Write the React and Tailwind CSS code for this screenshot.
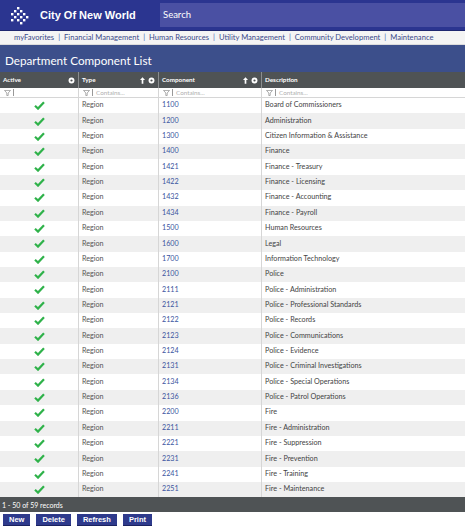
import React from "react";

const rows = [
  ["1100", "Board of Commissioners"],
  ["1200", "Administration"],
  ["1300", "Citizen Information & Assistance"],
  ["1400", "Finance"],
  ["1421", "Finance - Treasury"],
  ["1422", "Finance - Licensing"],
  ["1432", "Finance - Accounting"],
  ["1434", "Finance - Payroll"],
  ["1500", "Human Resources"],
  ["1600", "Legal"],
  ["1700", "Information Technology"],
  ["2100", "Police"],
  ["2111", "Police - Administration"],
  ["2121", "Police - Professional Standards"],
  ["2122", "Police - Records"],
  ["2123", "Police - Communications"],
  ["2124", "Police - Evidence"],
  ["2131", "Police - Criminal Investigations"],
  ["2134", "Police - Special Operations"],
  ["2136", "Police - Patrol Operations"],
  ["2200", "Fire"],
  ["2211", "Fire - Administration"],
  ["2221", "Fire - Suppression"],
  ["2231", "Fire - Prevention"],
  ["2241", "Fire - Training"],
  ["2251", "Fire - Maintenance"],
];

const nav = [
  "myFavorites",
  "Financial Management",
  "Human Resources",
  "Utility Management",
  "Community Development",
  "Maintenance",
];

const Logo = () => {
  // diamond lattice of small squares
  const pts = [
    [6, 0], [3, 3], [9, 3], [0, 6], [6, 6], [12, 6], [3, 9], [9, 9], [15, 9],
    [6, 12], [12, 12], [9, 15], [0, 12],
  ];
  return (
    <svg width="19" height="19" viewBox="0 0 19 19">
      {pts.map(([x, y], i) => (
        <rect key={i} x={x + 1} y={y + 1} width="2.4" height="2.4" fill="white" />
      ))}
    </svg>
  );
};

const Gear = () => (
  <svg width="7" height="7" viewBox="0 0 10 10">
    <circle cx="5" cy="5" r="4.2" fill="white" />
    <circle cx="5" cy="5" r="1.6" fill="#4f5355" />
  </svg>
);

const Arrow = () => (
  <svg width="5" height="7" viewBox="0 0 6 8">
    <path d="M3 0 L6 3.5 H4 V8 H2 V3.5 H0 Z" fill="white" />
  </svg>
);

const Funnel = () => (
  <svg width="7" height="6" viewBox="0 0 8 7">
    <path d="M0.5 0.5 H7.5 L4.8 3.5 V6.5 H3.2 V3.5 Z" fill="none" stroke="#888" strokeWidth="0.8" />
  </svg>
);

const Check = () => (
  <svg width="11" height="9" viewBox="0 0 11 9">
    <path d="M1 4.8 L4 7.6 L10 1.2" fill="none" stroke="#2fb24a" strokeWidth="2.2" />
  </svg>
);

const FilterCell = ({ text, className }) => (
  <div className={`flex items-center gap-[2px] px-[4px] border-r border-[#d6d6d6] ${className}`}>
    <Funnel />
    <span className="w-px h-[7px] bg-[#999]"></span>
    {text && <span className="text-[#b0b0b0] ml-px">Contains...</span>}
  </div>
);

export default function App() {
  return (
    <div className="w-[465px] h-[528px] bg-white overflow-hidden font-['Lato',sans-serif]">
      <header className="h-[30px] bg-[#2b3590] flex items-center">
        <div className="w-[160px] flex items-center pl-[10px] gap-[11px]">
          <Logo />
          <span className="text-white font-bold text-[11px] font-['Liberation_Sans',sans-serif] whitespace-nowrap">
            City Of New World
          </span>
        </div>
        <div className="flex-1 h-[24px] bg-[#4a50a3] flex items-center pl-[3px] text-white text-[9.5px]">
          Search
        </div>
      </header>
      <div className="h-px bg-[#1f2770]"></div>
      <nav className="h-[14px] bg-[#f4f4f4] border-b border-[#dcdcdc] flex items-center pl-[14px] text-[7.6px] text-[#3b4a8a] whitespace-nowrap">
        {nav.map((n, i) => (
          <React.Fragment key={n}>
            {i > 0 && <span className="mx-[4px] text-[#4a6ab0]">|</span>}
            <span>{n}</span>
          </React.Fragment>
        ))}
      </nav>
      <div className="h-[27px] bg-[#3c4f8b] flex items-end pl-[5px] pb-[2px]">
        <span className="text-white text-[11.7px]">Department Component List</span>
      </div>
      <div className="flex h-[16px] bg-[#4f5355] text-white text-[6.3px] font-bold">
        <div className="w-[79px] flex items-center justify-between px-[3px] border-r border-[#8a8d8f]">
          <span>Active</span>
          <Gear />
        </div>
        <div className="w-[80px] flex items-center justify-between px-[3px] border-r border-[#8a8d8f]">
          <span>Type</span>
          <span className="flex items-center gap-[3px]"><Arrow /><Gear /></span>
        </div>
        <div className="w-[103px] flex items-center justify-between px-[3px] border-r border-[#8a8d8f]">
          <span>Component</span>
          <span className="flex items-center gap-[3px]"><Arrow /><Gear /></span>
        </div>
        <div className="flex-1 flex items-center px-[3px]">
          <span>Description</span>
        </div>
      </div>
      <div className="flex h-[10px] text-[6.3px] border-b border-[#d6d6d6]">
        <FilterCell className="w-[79px]" />
        <FilterCell className="w-[80px]" text />
        <FilterCell className="w-[103px]" text />
        <FilterCell className="flex-1 border-r-0" text />
      </div>
      <div>
        {rows.map(([code, desc], i) => (
          <div
            key={code}
            className={`flex h-[15.36px] text-[7.2px] ${i % 2 ? "bg-[#efefef]" : "bg-white"}`}
          >
            <div className="w-[79px] flex items-center justify-center border-r border-[#d6d6d6]">
              <Check />
            </div>
            <div className="w-[80px] flex items-center px-[3px] border-r border-[#d6d6d6] text-[#555]">
              Region
            </div>
            <div className="w-[103px] flex items-center px-[3px] border-r border-[#d6d6d6] text-[#3a55a0]">
              {code}
            </div>
            <div className="flex-1 flex items-center px-[3px] text-[#444]">{desc}</div>
          </div>
        ))}
      </div>
      <div className="h-[15px] bg-[#4f5355] flex items-center pl-[2px] text-white text-[7px]">
        1 - 50 of 59 records
      </div>
      <div className="flex gap-[6px] pl-[3px] pt-[2px] text-white text-[7.5px] font-bold font-['Liberation_Sans',sans-serif]">
        {["New", "Delete", "Refresh", "Print"].map((b) => (
          <div key={b} className="h-[12px] px-[6px] bg-[#2e3a8c] flex items-center border-b border-[#1b2260]">
            {b}
          </div>
        ))}
      </div>
    </div>
  );
}
